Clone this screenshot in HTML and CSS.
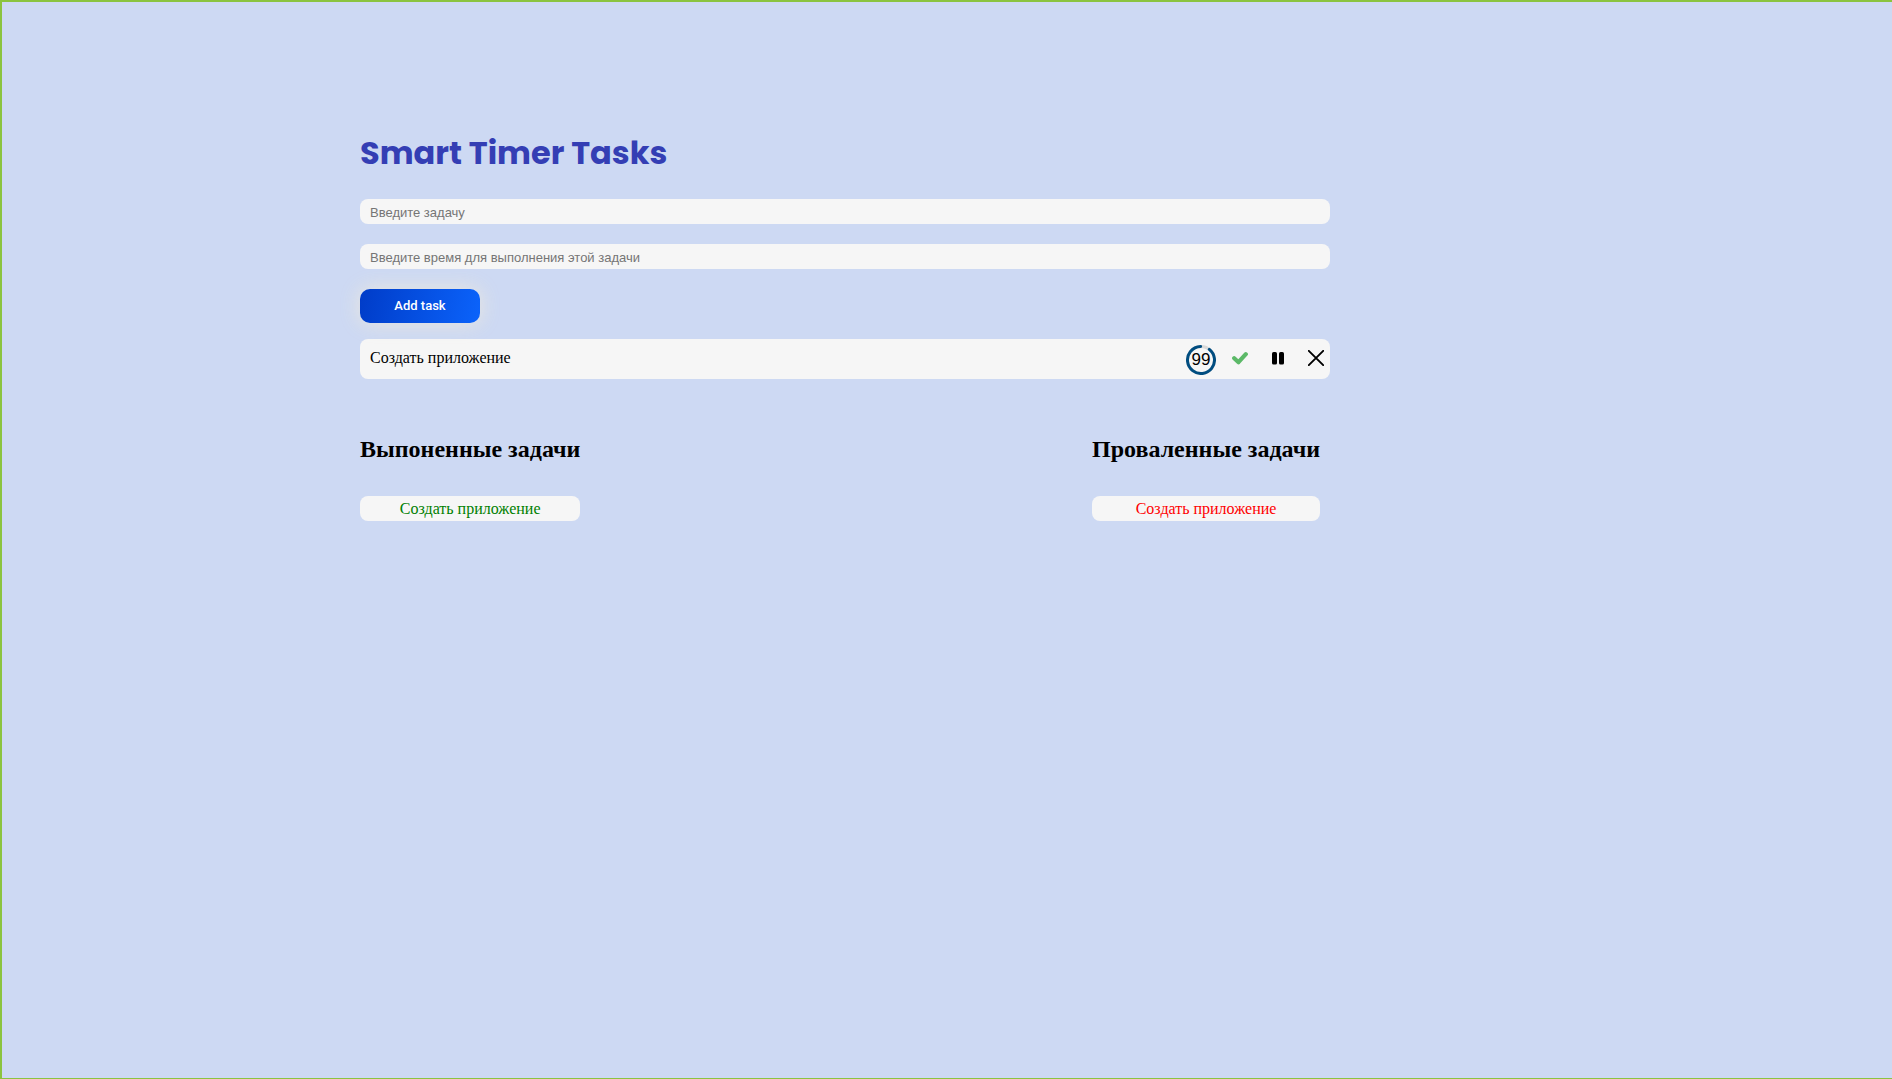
FILE: index.html
```html
<!DOCTYPE html>
<html lang="ru">
<head>
<meta charset="utf-8">
<title>Smart Timer Tasks</title>
<link rel="stylesheet" href="styles.css">
</head>
<body>
<main class="container">
  <h1 class="title">Smart Timer Tasks</h1>
  <form class="task-form">
    <input class="field" type="text" aria-label="Задача" placeholder="Введите задачу">
    <input class="field" type="text" aria-label="Время" placeholder="Введите время для выполнения этой задачи">
    <button class="add-button" type="button">Add task</button>
  </form>
  <ul class="tasks">
    <li class="task">
      <span class="task-name">Создать приложение</span>
      <div class="timer">
        <svg class="timer-ring" viewBox="0 0 30 30" aria-hidden="true">
          <circle cx="15" cy="15" r="13.5" fill="none" stroke="#d9d9d9" stroke-width="3"/>
          <circle cx="15" cy="15" r="13.5" fill="none" stroke="#004d80" stroke-width="3" stroke-linecap="round" pathLength="100" stroke-dasharray="89 11" transform="rotate(-52 15 15)"/>
        </svg>
        <span class="timer-value">99</span>
      </div>
      <button class="icon-button" type="button" aria-label="Выполнить">
        <svg viewBox="0 0 16 16"><path d="M2.2 8.2l4.3 4L13.8 4.2" fill="none" stroke="#5cb968" stroke-width="4.2" stroke-linecap="round" stroke-linejoin="round"/></svg>
      </button>
      <button class="icon-button" type="button" aria-label="Пауза">
        <svg viewBox="0 0 16 16"><rect x="2" y="2" width="5" height="12.500" rx="1.6"/><rect x="9" y="2" width="5" height="12.500" rx="1.6"/></svg>
      </button>
      <button class="icon-button" type="button" aria-label="Удалить">
        <svg viewBox="0 0 16 16"><path d="M.8.8l14.4 14.4M15.2.8L.8 15.2" fill="none" stroke="#000" stroke-width="1.9" stroke-linecap="round"/></svg>
      </button>
    </li>
  </ul>
  <div class="results">
    <section class="result">
      <h2 class="result-title">Выпоненные задачи</h2>
      <p class="result-item done">Создать приложение</p>
    </section>
    <section class="result">
      <h2 class="result-title">Проваленные задачи</h2>
      <p class="result-item failed">Создать приложение</p>
    </section>
  </div>
</main>
</body>
</html>
```
FILE: styles.css
```css
* {
  box-sizing: border-box;
}

body {
  margin: 0;
  min-height: 100vh;
  border: 2px solid #8bc43f;
  border-width: 2px 0 1px 2px;
  background: #cdd9f3;
  color: #000;
  font: 16px/20px "Liberation Serif", "Times New Roman", serif;
}

.container {
  max-width: 1174px;
  margin: 0 auto;
  padding: 126px 204px 0 0;
}

.title {
  margin: 0 0 21px;
  color: #343eb4;
  font: 700 32px/50px Poppins, Inter, sans-serif;
}

.task-form {
  display: flex;
  flex-direction: column;
  align-items: flex-start;
  gap: 20px;
}

.field {
  width: 100%;
  height: 25px;
  padding: 2px 10px 0;
  border: 0;
  border-radius: 8px;
  background: #f6f6f6;
  font: 13px "Liberation Sans", Arial, sans-serif;
}

.field::placeholder {
  color: #757575;
}

.add-button {
  width: 120px;
  height: 34px;
  padding: 0 0 2px;
  border: 0;
  border-radius: 10px;
  background: linear-gradient(100deg, #003cc8, #0b63fb);
  box-shadow: 0 0 20px #f5ecd8cc;
  color: #fff;
  font: 500 13px Roboto, sans-serif;
}

.tasks {
  margin: 16px 0 0;
  padding: 0;
  list-style: none;
}

.task {
  display: flex;
  align-items: center;
  height: 40px;
  padding: 0 6px 0 10px;
  border-radius: 8px;
  background: #f6f6f6;
}

.task-name {
  flex: 1;
  padding-bottom: 2px;
}

.timer {
  display: grid;
  place-items: center;
  width: 30px;
  height: 30px;
  margin-top: 2px;
  font: 17px "Liberation Sans", Arial, sans-serif;
}

.timer-ring,
.timer-value {
  grid-area: 1 / 1;
}

.timer-ring {
  width: 30px;
  height: 30px;
}

.icon-button {
  width: 16px;
  height: 16px;
  margin: 0 0 2px 22px;
  padding: 0;
  border: 0;
  background: none;
}

.timer + .icon-button {
  margin-left: 16px;
}

.icon-button svg {
  display: block;
}

.results {
  display: flex;
  justify-content: space-between;
  padding: 55px 10px 0 0;
}

.result-title {
  margin: 0 0 32px;
  font-size: 24px;
  line-height: 30px;
}

.result-item {
  margin: 0;
  padding: 3px 0 2px;
  border-radius: 8px;
  background: #f6f6f6;
  text-align: center;
}

.done {
  color: #008000;
}

.failed {
  color: #ff0000;
}
```
